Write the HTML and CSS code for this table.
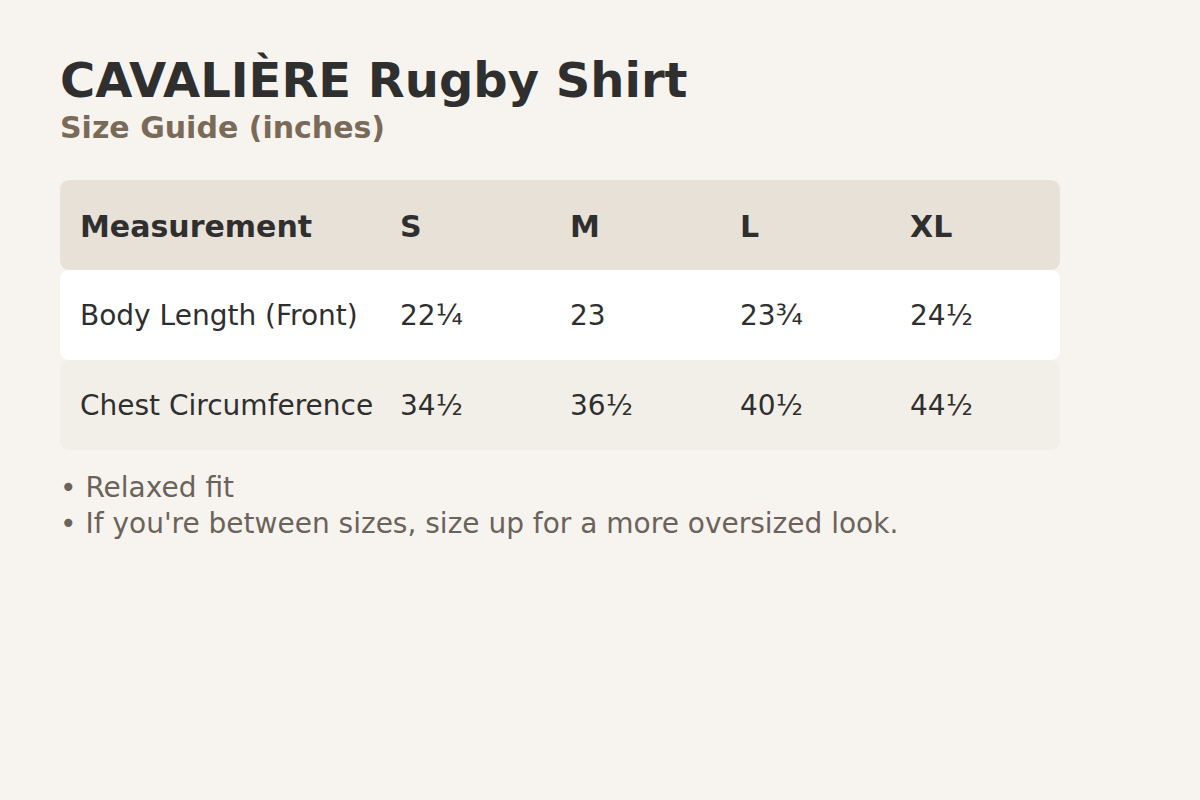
FILE: index.html
```html
<!DOCTYPE html>
<html lang="en">
<head>
<meta charset="utf-8">
<title>CAVALIÈRE Rugby Shirt – Size Guide</title>
<link rel="stylesheet" href="styles.css">
</head>
<body>
<main class="page">
  <h1 class="title">CAVALIÈRE Rugby Shirt</h1>
  <h2 class="subtitle">Size Guide (inches)</h2>
  <div class="table">
    <div class="row head">
      <div class="cell first">Measurement</div>
      <div class="cell">S</div>
      <div class="cell">M</div>
      <div class="cell">L</div>
      <div class="cell">XL</div>
    </div>
    <div class="row white">
      <div class="cell first">Body Length (Front)</div>
      <div class="cell">22¼</div>
      <div class="cell">23</div>
      <div class="cell">23¾</div>
      <div class="cell">24½</div>
    </div>
    <div class="row alt">
      <div class="cell first">Chest Circumference</div>
      <div class="cell">34½</div>
      <div class="cell">36½</div>
      <div class="cell">40½</div>
      <div class="cell">44½</div>
    </div>
  </div>
  <ul class="notes">
    <li>• Relaxed fit</li>
    <li>• If you're between sizes, size up for a more oversized look.</li>
  </ul>
</main>
</body>
</html>
```

FILE: styles.css
```css
html, body {
  margin: 0;
  padding: 0;
  background: #f7f4ef;
}
body {
  font-family: "DejaVu Sans", sans-serif;
  color: #2f2f2f;
}
.page {
  padding: 48px 60px;
}
.title {
  margin: 0;
  font-size: 48px;
  font-weight: bold;
  line-height: 64px;
  color: #2f2f2f;
}
.subtitle {
  margin: 0;
  font-size: 30px;
  font-weight: bold;
  line-height: 32px;
  color: #7a6a58;
}
.table {
  margin-top: 36px;
  width: 1000px;
  display: flex;
  flex-direction: column;
}
.row {
  display: grid;
  grid-template-columns: 320px 170px 170px 170px 170px;
  height: 90px;
  box-sizing: border-box;
  padding-top: 2px;
  align-items: center;
  border-radius: 9px;
  font-size: 28px;
}
.row.head {
  background: #e8e1d8;
  font-weight: bold;
  font-size: 30px;
  padding-top: 3px;
}
.row.white {
  background: #ffffff;
}
.row.alt {
  background: #f2eee8;
}
.cell {
  padding-left: 20px;
  line-height: 36px;
}
.notes {
  list-style: none;
  margin: 20px 0 0;
  padding: 0;
  font-size: 28px;
  line-height: 36px;
  color: #6b635b;
}
```
